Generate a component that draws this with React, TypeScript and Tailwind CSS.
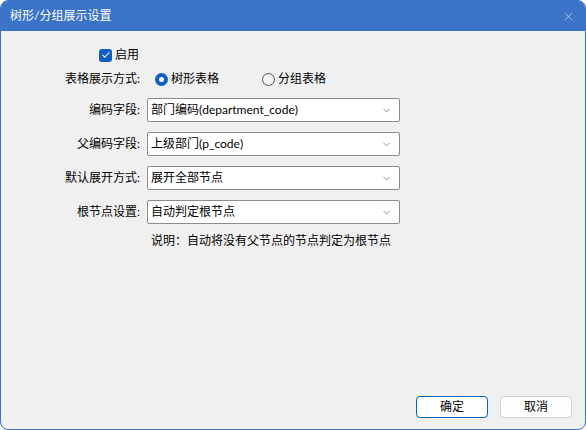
import { ChevronDown, X, Check } from 'lucide-react';

const font = { fontFamily: 'Lato, "Noto Sans CJK SC", sans-serif' };

function Select({ value }: { value: string }) {
  return (
    <div className="flex h-[24px] w-[253px] items-center justify-between rounded-[2px] border border-[#8c8c8c] bg-white pl-[3px] pr-[7px]">
      <span className="text-[12px] leading-none text-black">{value}</span>
      <ChevronDown className="h-[11px] w-[11px] text-[#606060]" strokeWidth={1.5} />
    </div>
  );
}

function Row({ label, children, className = '' }: { label: string; children: React.ReactNode; className?: string }) {
  return (
    <div className={`flex items-center ${className}`}>
      <div className="w-[140px] pr-[1px] text-right text-[12px] leading-none text-black">{label}</div>
      <div className="ml-[6px]">{children}</div>
    </div>
  );
}

function Radio({ checked, label }: { checked: boolean; label: string }) {
  return (
    <div className="flex items-center gap-[3px]">
      {checked ? (
        <span className="flex h-[13px] w-[13px] items-center justify-center rounded-full bg-[#0f5fc0]">
          <span className="h-[5px] w-[5px] rounded-full bg-white" />
        </span>
      ) : (
        <span className="h-[13px] w-[13px] rounded-full border border-[#555] bg-[#f6f6f6]" />
      )}
      <span className="text-[12px] leading-none text-black">{label}</span>
    </div>
  );
}

export default function App() {
  return (
    <div style={font} className="flex h-[430px] w-[586px] flex-col overflow-hidden rounded-[8px] border border-[#3a73c8] bg-[#f0f0f0]">
      {/* title bar */}
      <div className="flex h-[30px] shrink-0 items-center justify-between bg-[#3a73c8] pl-[9px] pr-[10px]">
        <span className="text-[12px] leading-none text-white">树形/分组展示设置</span>
        <X className="h-[13px] w-[13px] text-white" strokeWidth={1} />
      </div>

      <div className="flex flex-1 flex-col">
        <div className="ml-[98px] mt-[17px] flex h-[14px] items-center gap-[3px]">
          <span className="flex h-[13px] w-[13px] items-center justify-center rounded-[3px] bg-[#0f5fc0]">
            <Check className="h-[10px] w-[10px] text-white" strokeWidth={2.5} />
          </span>
          <span className="text-[12px] leading-none text-black">启用</span>
        </div>

        <Row label="表格展示方式:" className="mt-[5px] h-[24px]">
          <div className="ml-[8px] flex items-center gap-[43px]">
            <Radio checked label="树形表格" />
            <Radio checked={false} label="分组表格" />
          </div>
        </Row>

        <div className="mt-[7px] flex flex-col gap-[10px]">
          <Row label="编码字段:">
            <Select value="部门编码(department_code)" />
          </Row>
          <Row label="父编码字段:">
            <Select value="上级部门(p_code)" />
          </Row>
          <Row label="默认展开方式:">
            <Select value="展开全部节点" />
          </Row>
          <Row label="根节点设置:">
            <Select value="自动判定根节点" />
          </Row>
        </div>

        <div className="ml-[150px] mt-[8px] flex h-[18px] items-center text-[12px] leading-none text-black">
          说明：自动将没有父节点的节点判定为根节点
        </div>

        {/* footer buttons */}
        <div className="mt-auto flex justify-end gap-[12px] pb-[11px] pr-[13px]">
          <button className="h-[22px] w-[72px] rounded-[4px] border border-[#0067c0] bg-white text-[12px] leading-none text-black">
            确定
          </button>
          <button className="h-[22px] w-[72px] rounded-[4px] border border-[#cfcfcf] bg-[#fdfdfd] text-[12px] leading-none text-black">
            取消
          </button>
        </div>
      </div>
    </div>
  );
}
